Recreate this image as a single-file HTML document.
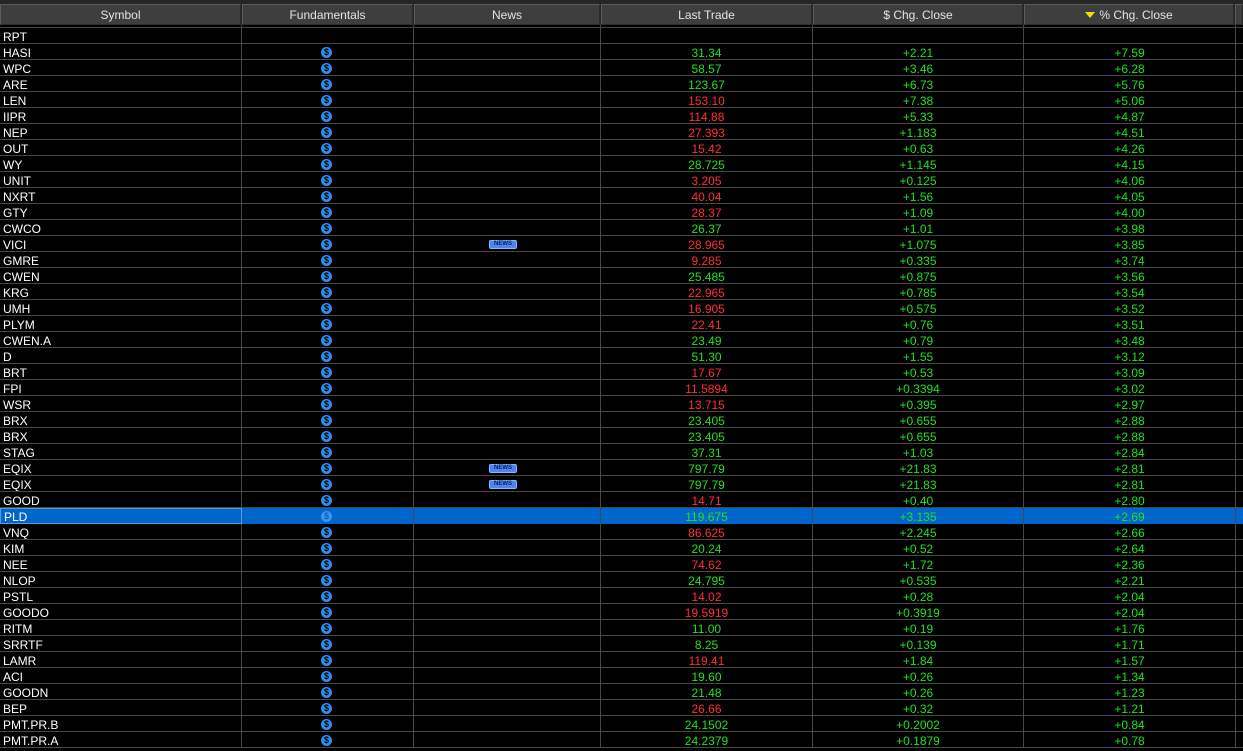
<!DOCTYPE html>
<html><head><meta charset="utf-8"><style>
body{margin:0;background:#000;width:1243px;height:751px;overflow:hidden;font-family:"Liberation Sans",sans-serif;font-size:12px}
.top{position:absolute;left:0;top:0;width:1243px;height:4px;background:#262626}
.hdr{position:absolute;top:4px;left:0;height:21px;display:flex;background:#262626}
.hdr div{box-sizing:border-box;height:21px;background:#3e3e3e;border:1px solid #5c5c5c;border-bottom-color:#2a2a2a;border-right-color:#2a2a2a;color:#e4e4e4;text-align:center;line-height:20px;margin-right:1px}
.rows{position:absolute;left:0;top:12px}
.r{display:flex;height:16px}
.r div{box-sizing:border-box;height:16px;border-right:1px solid #474747;border-bottom:1px solid #474747;line-height:19px;white-space:nowrap;overflow:hidden;position:relative}
.c1{width:242px;color:#fff;padding-left:3px}
.c2{width:172px;text-align:center}
.c3{width:187px;text-align:center}
.c4{width:212px;text-align:center}
.c5{width:211px;text-align:center;color:#22e022}
.c6{width:212px;text-align:center;color:#22e022}
.c7{width:8px}
.g{color:#22e022}.x{color:#ff3030}
.d{position:absolute;left:79px;top:3px;width:11px;height:11px;border-radius:50%;background:#2f8ff0;color:#000;font-size:9px;font-weight:bold;line-height:11px;text-align:center}
.n{position:absolute;left:75px;top:4px;width:26px;height:7px;background:#4a86f0;color:#102060;font-size:6px;font-weight:bold;line-height:7px;text-align:center;border-radius:2px;border:1px solid #8ab0ff}
.sel div{background:#0066cc;border-bottom-color:#0066cc}
.sel .c1{border:1px solid #5a9ae0;line-height:17px}
.sel .d{background:#3d95ee;color:#0066cc}
</style></head><body>
<div class="top"></div>
<div class="rows">
<div class="r"><div class="c1"></div><div class="c2"></div><div class="c3"></div><div class="c4"></div><div class="c5"></div><div class="c6"></div><div class="c7"></div></div>
<div class="r"><div class="c1">RPT</div><div class="c2"></div><div class="c3"></div><div class="c4"></div><div class="c5"></div><div class="c6"></div><div class="c7"></div></div>
<div class="r"><div class="c1">HASI</div><div class="c2"><span class="d">$</span></div><div class="c3"></div><div class="c4 g">31.34</div><div class="c5">+2.21</div><div class="c6">+7.59</div><div class="c7"></div></div>
<div class="r"><div class="c1">WPC</div><div class="c2"><span class="d">$</span></div><div class="c3"></div><div class="c4 g">58.57</div><div class="c5">+3.46</div><div class="c6">+6.28</div><div class="c7"></div></div>
<div class="r"><div class="c1">ARE</div><div class="c2"><span class="d">$</span></div><div class="c3"></div><div class="c4 g">123.67</div><div class="c5">+6.73</div><div class="c6">+5.76</div><div class="c7"></div></div>
<div class="r"><div class="c1">LEN</div><div class="c2"><span class="d">$</span></div><div class="c3"></div><div class="c4 x">153.10</div><div class="c5">+7.38</div><div class="c6">+5.06</div><div class="c7"></div></div>
<div class="r"><div class="c1">IIPR</div><div class="c2"><span class="d">$</span></div><div class="c3"></div><div class="c4 x">114.88</div><div class="c5">+5.33</div><div class="c6">+4.87</div><div class="c7"></div></div>
<div class="r"><div class="c1">NEP</div><div class="c2"><span class="d">$</span></div><div class="c3"></div><div class="c4 x">27.393</div><div class="c5">+1.183</div><div class="c6">+4.51</div><div class="c7"></div></div>
<div class="r"><div class="c1">OUT</div><div class="c2"><span class="d">$</span></div><div class="c3"></div><div class="c4 x">15.42</div><div class="c5">+0.63</div><div class="c6">+4.26</div><div class="c7"></div></div>
<div class="r"><div class="c1">WY</div><div class="c2"><span class="d">$</span></div><div class="c3"></div><div class="c4 g">28.725</div><div class="c5">+1.145</div><div class="c6">+4.15</div><div class="c7"></div></div>
<div class="r"><div class="c1">UNIT</div><div class="c2"><span class="d">$</span></div><div class="c3"></div><div class="c4 x">3.205</div><div class="c5">+0.125</div><div class="c6">+4.06</div><div class="c7"></div></div>
<div class="r"><div class="c1">NXRT</div><div class="c2"><span class="d">$</span></div><div class="c3"></div><div class="c4 x">40.04</div><div class="c5">+1.56</div><div class="c6">+4.05</div><div class="c7"></div></div>
<div class="r"><div class="c1">GTY</div><div class="c2"><span class="d">$</span></div><div class="c3"></div><div class="c4 x">28.37</div><div class="c5">+1.09</div><div class="c6">+4.00</div><div class="c7"></div></div>
<div class="r"><div class="c1">CWCO</div><div class="c2"><span class="d">$</span></div><div class="c3"></div><div class="c4 g">26.37</div><div class="c5">+1.01</div><div class="c6">+3.98</div><div class="c7"></div></div>
<div class="r"><div class="c1">VICI</div><div class="c2"><span class="d">$</span></div><div class="c3"><span class="n">NEWS</span></div><div class="c4 x">28.965</div><div class="c5">+1.075</div><div class="c6">+3.85</div><div class="c7"></div></div>
<div class="r"><div class="c1">GMRE</div><div class="c2"><span class="d">$</span></div><div class="c3"></div><div class="c4 x">9.285</div><div class="c5">+0.335</div><div class="c6">+3.74</div><div class="c7"></div></div>
<div class="r"><div class="c1">CWEN</div><div class="c2"><span class="d">$</span></div><div class="c3"></div><div class="c4 g">25.485</div><div class="c5">+0.875</div><div class="c6">+3.56</div><div class="c7"></div></div>
<div class="r"><div class="c1">KRG</div><div class="c2"><span class="d">$</span></div><div class="c3"></div><div class="c4 x">22.965</div><div class="c5">+0.785</div><div class="c6">+3.54</div><div class="c7"></div></div>
<div class="r"><div class="c1">UMH</div><div class="c2"><span class="d">$</span></div><div class="c3"></div><div class="c4 x">16.905</div><div class="c5">+0.575</div><div class="c6">+3.52</div><div class="c7"></div></div>
<div class="r"><div class="c1">PLYM</div><div class="c2"><span class="d">$</span></div><div class="c3"></div><div class="c4 x">22.41</div><div class="c5">+0.76</div><div class="c6">+3.51</div><div class="c7"></div></div>
<div class="r"><div class="c1">CWEN.A</div><div class="c2"><span class="d">$</span></div><div class="c3"></div><div class="c4 g">23.49</div><div class="c5">+0.79</div><div class="c6">+3.48</div><div class="c7"></div></div>
<div class="r"><div class="c1">D</div><div class="c2"><span class="d">$</span></div><div class="c3"></div><div class="c4 g">51.30</div><div class="c5">+1.55</div><div class="c6">+3.12</div><div class="c7"></div></div>
<div class="r"><div class="c1">BRT</div><div class="c2"><span class="d">$</span></div><div class="c3"></div><div class="c4 x">17.67</div><div class="c5">+0.53</div><div class="c6">+3.09</div><div class="c7"></div></div>
<div class="r"><div class="c1">FPI</div><div class="c2"><span class="d">$</span></div><div class="c3"></div><div class="c4 x">11.5894</div><div class="c5">+0.3394</div><div class="c6">+3.02</div><div class="c7"></div></div>
<div class="r"><div class="c1">WSR</div><div class="c2"><span class="d">$</span></div><div class="c3"></div><div class="c4 x">13.715</div><div class="c5">+0.395</div><div class="c6">+2.97</div><div class="c7"></div></div>
<div class="r"><div class="c1">BRX</div><div class="c2"><span class="d">$</span></div><div class="c3"></div><div class="c4 g">23.405</div><div class="c5">+0.655</div><div class="c6">+2.88</div><div class="c7"></div></div>
<div class="r"><div class="c1">BRX</div><div class="c2"><span class="d">$</span></div><div class="c3"></div><div class="c4 g">23.405</div><div class="c5">+0.655</div><div class="c6">+2.88</div><div class="c7"></div></div>
<div class="r"><div class="c1">STAG</div><div class="c2"><span class="d">$</span></div><div class="c3"></div><div class="c4 g">37.31</div><div class="c5">+1.03</div><div class="c6">+2.84</div><div class="c7"></div></div>
<div class="r"><div class="c1">EQIX</div><div class="c2"><span class="d">$</span></div><div class="c3"><span class="n">NEWS</span></div><div class="c4 g">797.79</div><div class="c5">+21.83</div><div class="c6">+2.81</div><div class="c7"></div></div>
<div class="r"><div class="c1">EQIX</div><div class="c2"><span class="d">$</span></div><div class="c3"><span class="n">NEWS</span></div><div class="c4 g">797.79</div><div class="c5">+21.83</div><div class="c6">+2.81</div><div class="c7"></div></div>
<div class="r"><div class="c1">GOOD</div><div class="c2"><span class="d">$</span></div><div class="c3"></div><div class="c4 x">14.71</div><div class="c5">+0.40</div><div class="c6">+2.80</div><div class="c7"></div></div>
<div class="r sel"><div class="c1">PLD</div><div class="c2"><span class="d">$</span></div><div class="c3"></div><div class="c4 g">119.675</div><div class="c5">+3.135</div><div class="c6">+2.69</div><div class="c7"></div></div>
<div class="r"><div class="c1">VNQ</div><div class="c2"><span class="d">$</span></div><div class="c3"></div><div class="c4 x">86.625</div><div class="c5">+2.245</div><div class="c6">+2.66</div><div class="c7"></div></div>
<div class="r"><div class="c1">KIM</div><div class="c2"><span class="d">$</span></div><div class="c3"></div><div class="c4 g">20.24</div><div class="c5">+0.52</div><div class="c6">+2.64</div><div class="c7"></div></div>
<div class="r"><div class="c1">NEE</div><div class="c2"><span class="d">$</span></div><div class="c3"></div><div class="c4 x">74.62</div><div class="c5">+1.72</div><div class="c6">+2.36</div><div class="c7"></div></div>
<div class="r"><div class="c1">NLOP</div><div class="c2"><span class="d">$</span></div><div class="c3"></div><div class="c4 g">24.795</div><div class="c5">+0.535</div><div class="c6">+2.21</div><div class="c7"></div></div>
<div class="r"><div class="c1">PSTL</div><div class="c2"><span class="d">$</span></div><div class="c3"></div><div class="c4 x">14.02</div><div class="c5">+0.28</div><div class="c6">+2.04</div><div class="c7"></div></div>
<div class="r"><div class="c1">GOODO</div><div class="c2"><span class="d">$</span></div><div class="c3"></div><div class="c4 x">19.5919</div><div class="c5">+0.3919</div><div class="c6">+2.04</div><div class="c7"></div></div>
<div class="r"><div class="c1">RITM</div><div class="c2"><span class="d">$</span></div><div class="c3"></div><div class="c4 g">11.00</div><div class="c5">+0.19</div><div class="c6">+1.76</div><div class="c7"></div></div>
<div class="r"><div class="c1">SRRTF</div><div class="c2"><span class="d">$</span></div><div class="c3"></div><div class="c4 g">8.25</div><div class="c5">+0.139</div><div class="c6">+1.71</div><div class="c7"></div></div>
<div class="r"><div class="c1">LAMR</div><div class="c2"><span class="d">$</span></div><div class="c3"></div><div class="c4 x">119.41</div><div class="c5">+1.84</div><div class="c6">+1.57</div><div class="c7"></div></div>
<div class="r"><div class="c1">ACI</div><div class="c2"><span class="d">$</span></div><div class="c3"></div><div class="c4 g">19.60</div><div class="c5">+0.26</div><div class="c6">+1.34</div><div class="c7"></div></div>
<div class="r"><div class="c1">GOODN</div><div class="c2"><span class="d">$</span></div><div class="c3"></div><div class="c4 g">21.48</div><div class="c5">+0.26</div><div class="c6">+1.23</div><div class="c7"></div></div>
<div class="r"><div class="c1">BEP</div><div class="c2"><span class="d">$</span></div><div class="c3"></div><div class="c4 x">26.66</div><div class="c5">+0.32</div><div class="c6">+1.21</div><div class="c7"></div></div>
<div class="r"><div class="c1">PMT.PR.B</div><div class="c2"><span class="d">$</span></div><div class="c3"></div><div class="c4 g">24.1502</div><div class="c5">+0.2002</div><div class="c6">+0.84</div><div class="c7"></div></div>
<div class="r"><div class="c1">PMT.PR.A</div><div class="c2"><span class="d">$</span></div><div class="c3"></div><div class="c4 g">24.2379</div><div class="c5">+0.1879</div><div class="c6">+0.78</div><div class="c7"></div></div>
</div>
<div class="hdr">
<div style="width:241px">Symbol</div>
<div style="width:171px">Fundamentals</div>
<div style="width:186px">News</div>
<div style="width:211px">Last Trade</div>
<div style="width:210px">$ Chg. Close</div>
<div style="width:210px"><span style="display:inline-block;width:0;height:0;border-left:5px solid transparent;border-right:5px solid transparent;border-top:6px solid #f0e000;margin-right:4px;vertical-align:1px"></span>% Chg. Close</div>
<div style="width:8px"></div>
</div>
</body></html>
